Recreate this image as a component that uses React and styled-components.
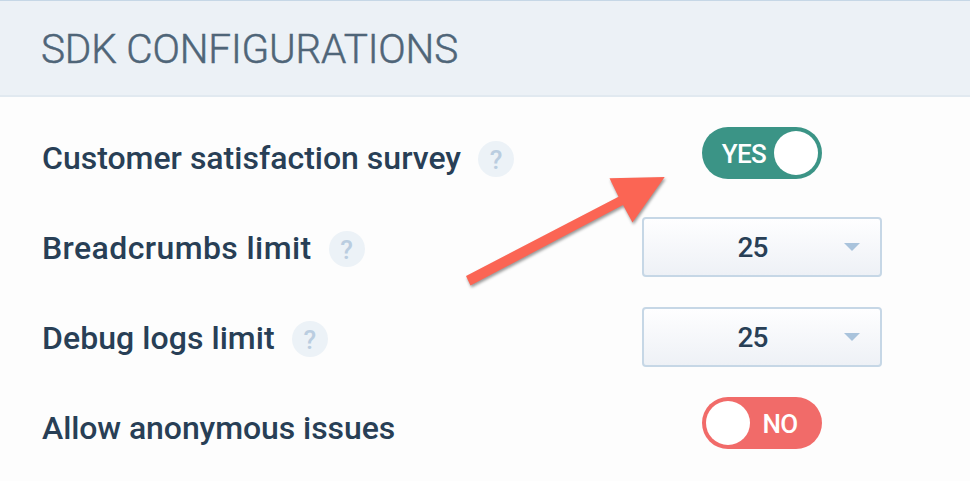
import React from "react";
import styled, { createGlobalStyle } from "styled-components";

const GlobalStyle = createGlobalStyle`
  * { box-sizing: border-box; }
  body {
    margin: 0;
    overflow: hidden;
    background: #fdfdfd;
    font-family: Roboto, "Liberation Sans", sans-serif;
  }
`;

const Panel = styled.section`
  position: relative;
  height: 481px;
  background: #fdfdfd;
`;

const Header = styled.header`
  height: 97px;
  padding: 0 41px;
  background: #ecf1f6;
  border-top: 1px solid #c6d7e6;
  border-bottom: 2px solid #e1e9f0;
`;

const Title = styled.h1`
  margin: 0;
  color: #4f6578;
  font-size: 40.5px;
  font-weight: 300;
  line-height: 96px;
  letter-spacing: -0.17px;
  -webkit-text-stroke: 0.5px #4f6578;
  white-space: nowrap;
`;

const Rows = styled.div`
  padding: 16px 88px 0 42px;
`;

const Row = styled.div`
  display: flex;
  height: 90px;
`;

const LabelCell = styled.div`
  display: flex;
  flex: 1;
  align-items: center;
  gap: 17px;
`;

const Label = styled.span`
  color: #283f56;
  font-size: 32px;
  font-weight: 500;
  line-height: 38px;
  letter-spacing: ${(p) => p.$tracking}px;
  white-space: nowrap;
`;

const Help = styled.span`
  width: 36px;
  height: 36px;
  margin-top: 2px;
  border-radius: 50%;
  background: #ecf2f7;
  color: #bacde0;
  font-size: 26px;
  font-weight: 500;
  line-height: 38px;
  text-align: center;
`;

const ControlCell = styled.div`
  display: flex;
  justify-content: center;
  align-items: flex-start;
  width: 240px;
  padding-top: 14px;
`;

const Switch = styled.div`
  display: flex;
  flex-direction: ${(p) => (p.$on ? "row" : "row-reverse")};
  align-items: center;
  width: 120px;
  height: 52px;
  padding: 4px;
  border-radius: 26px;
  background: ${(p) => (p.$on ? "#3b9486" : "#f16b69")};
`;

const SwitchText = styled.span`
  flex: 1;
  padding-top: 2px;
  padding-left: ${(p) => (p.$on ? 8 : 0)}px;
  padding-right: ${(p) => (p.$on ? 0 : 8)}px;
  color: #fff;
  font-size: 26px;
  font-weight: 500;
  line-height: 44px;
  text-align: center;
  letter-spacing: -0.6px;
`;

const Knob = styled.span`
  width: 44px;
  height: 44px;
  border-radius: 50%;
  background: #fff;
`;

const Select = styled.div`
  display: grid;
  grid-template-columns: 1fr 16px;
  align-items: center;
  width: 240px;
  height: 60px;
  padding: 0 20px;
  border: 2px solid #c6d7e6;
  border-radius: 4px;
  background: linear-gradient(#fefeff, #eef1f6);
`;

const Value = styled.span`
  padding-top: 2px;
  padding-right: 3px;
  color: #283f56;
  font-size: 28px;
  font-weight: 500;
  line-height: 40px;
  letter-spacing: -1px;
  text-align: center;
`;

const Caret = styled.span`
  border: 8px solid transparent;
  border-top-color: #a9c3dc;
  border-bottom: 0;
`;

const Pointer = styled.svg`
  position: absolute;
  left: 455px;
  top: 165px;
  filter: drop-shadow(1px 2px 1.5px rgba(0, 0, 0, 0.4));
`;

function Toggle({ on }) {
  return (
    <Switch $on={on} role="switch" aria-checked={on}>
      <SwitchText $on={on}>{on ? "YES" : "NO"}</SwitchText>
      <Knob />
    </Switch>
  );
}

function Dropdown({ value }) {
  return (
    <Select>
      <Value>{value}</Value>
      <Caret />
    </Select>
  );
}

const settings = [
  { label: "Customer satisfaction survey", tracking: 0, help: true, on: true },
  { label: "Breadcrumbs limit", tracking: 0.4, help: true, value: 25 },
  { label: "Debug logs limit", tracking: 0.06, help: true, value: 25 },
  { label: "Allow anonymous issues", tracking: -0.08, on: false },
];

export default function App() {
  return (
    <>
      <GlobalStyle />
      <Panel>
        <Header>
          <Title>SDK CONFIGURATIONS</Title>
        </Header>
        <Rows>
          {settings.map((s) => (
            <Row key={s.label}>
              <LabelCell>
                <Label $tracking={s.tracking}>{s.label}</Label>
                {s.help && <Help>?</Help>}
              </LabelCell>
              <ControlCell>
                {s.value ? <Dropdown value={s.value} /> : <Toggle on={s.on} />}
              </ControlCell>
            </Row>
          ))}
        </Rows>
        <Pointer width="220" height="130" viewBox="0 0 220 130" aria-hidden="true">
          <path d="M11 111 163.500 31.700 154.500 13.300 209.700 12 177.500 57.500 168 40 15.500 120.500Z" fill="#fb6554" />
        </Pointer>
      </Panel>
    </>
  );
}
